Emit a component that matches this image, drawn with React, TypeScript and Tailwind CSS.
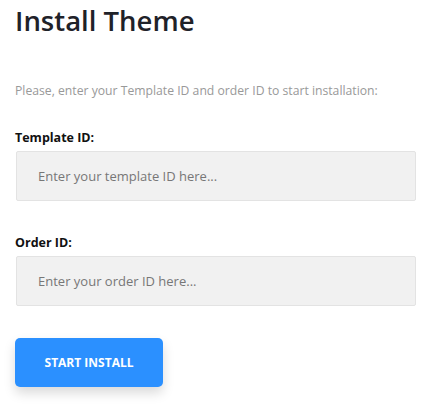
export default function App() {
  return (
    <div
      className="min-h-[404px] bg-white px-[15px] pt-[3px] text-[#222]"
      style={{ fontFamily: '"Open Sans", "Noto Sans", sans-serif' }}
    >
      <h1 className="text-[27.5px] leading-[36px] font-semibold text-[#1f2229]">Install Theme</h1>

      <p className="mt-[43px] text-[12.2px] leading-[18px] text-[#999]">
        Please, enter your Template ID and order ID to start installation:
      </p>

      <form className="mt-[30px] flex flex-col" onSubmit={(e) => e.preventDefault()}>
        <label className="text-[12.5px] leading-[16px] font-bold text-[#111]">Template ID:</label>
        <input
          type="text"
          placeholder="Enter your template ID here..."
          className="mt-[5px] ml-px h-[50px] w-[400px] rounded-[2px] border border-[#e3e3e3] bg-[#f1f1f1] px-[21px] text-[13px] text-[#333] outline-none placeholder:text-[#777]"
        />

        <label className="mt-[34px] text-[12.5px] leading-[16px] font-bold text-[#111]">Order ID:</label>
        <input
          type="text"
          placeholder="Enter your order ID here..."
          className="mt-[5px] ml-px h-[50px] w-[400px] rounded-[2px] border border-[#e3e3e3] bg-[#f1f1f1] px-[21px] text-[13px] text-[#333] outline-none placeholder:text-[#777]"
        />

        <button
          type="submit"
          className="mt-[32px] h-[49px] w-[148px] rounded-[5px] bg-[#2b90ff] text-[12px] font-bold uppercase text-white shadow-[0_6px_12px_rgba(0,0,0,0.15)]"
        >
          Start Install
        </button>
      </form>
    </div>
  )
}
